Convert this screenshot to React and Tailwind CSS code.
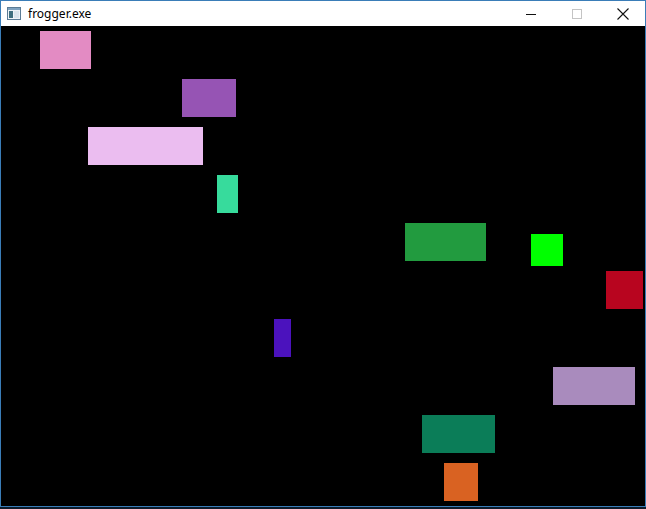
import React from 'react';

const blocks = [
  { x: 40, y: 31, w: 51, h: 38, c: 'bg-[#e38bc3]' },
  { x: 182, y: 79, w: 54, h: 38, c: 'bg-[#9654b4]' },
  { x: 88, y: 127, w: 115, h: 38, c: 'bg-[#ebbdf0]' },
  { x: 217, y: 175, w: 21, h: 38, c: 'bg-[#37db9c]' },
  { x: 405, y: 223, w: 81, h: 38, c: 'bg-[#229b3f]' },
  { x: 531, y: 234, w: 32, h: 32, c: 'bg-[#00ff00]' },
  { x: 606, y: 271, w: 37, h: 38, c: 'bg-[#b8051f]' },
  { x: 274, y: 319, w: 17, h: 38, c: 'bg-[#4b12bd]' },
  { x: 553, y: 367, w: 82, h: 38, c: 'bg-[#a98bbd]' },
  { x: 422, y: 415, w: 73, h: 38, c: 'bg-[#0b7d58]' },
  { x: 444, y: 463, w: 34, h: 38, c: 'bg-[#d96222]' },
];

const AppIcon = () => (
  <svg width="14" height="13" viewBox="0 0 14 13">
    <rect x="0.5" y="0.5" width="13" height="12" fill="#eef3f7" stroke="#5b7c96" />
    <rect x="1" y="1" width="12" height="2" fill="#7fa2bf" />
    <rect x="2" y="4" width="4" height="7" fill="#3f6f7f" />
    <rect x="7" y="4" width="5" height="7" fill="#d9e4ec" />
  </svg>
);

export default function App() {
  return (
    <div className="w-[646px] h-[509px] bg-[#0d1b2b] overflow-hidden" style={{ fontFamily: '"Noto Sans", "Liberation Sans", sans-serif' }}>
      <div className="w-[646px] h-[507px] border border-[#3a7db8] flex flex-col">
        {/* title bar */}
        <div className="h-[25px] bg-white flex items-center shrink-0">
          <div className="pl-[6px] pr-[7px] flex items-center">
            <AppIcon />
          </div>
          <span className="text-[12px] text-black leading-none">frogger.exe</span>
          <div className="ml-auto flex h-full">
            <div className="w-[46px] h-full flex items-center justify-center">
              <svg width="10" height="10" viewBox="0 0 10 10">
                <line x1="0" y1="5.5" x2="10" y2="5.5" stroke="#111" strokeWidth="1" />
              </svg>
            </div>
            <div className="w-[46px] h-full flex items-center justify-center">
              <svg width="10" height="10" viewBox="0 0 10 10">
                <rect x="0.5" y="0.5" width="9" height="9" fill="none" stroke="#c4c4c4" strokeWidth="1" />
              </svg>
            </div>
            <div className="w-[45px] h-full flex items-center justify-center">
              <svg width="12" height="12" viewBox="0 0 12 12">
                <path d="M0.5 0.5 L11.5 11.5 M11.5 0.5 L0.5 11.5" stroke="#111" strokeWidth="1.1" />
              </svg>
            </div>
          </div>
        </div>
        {/* game canvas */}
        <div className="relative flex-1 bg-black">
          {blocks.map((b, i) => (
            <div
              key={i}
              className={`absolute ${b.c}`}
              style={{ left: b.x - 1, top: b.y - 26, width: b.w, height: b.h }}
            />
          ))}
        </div>
      </div>
    </div>
  );
}
